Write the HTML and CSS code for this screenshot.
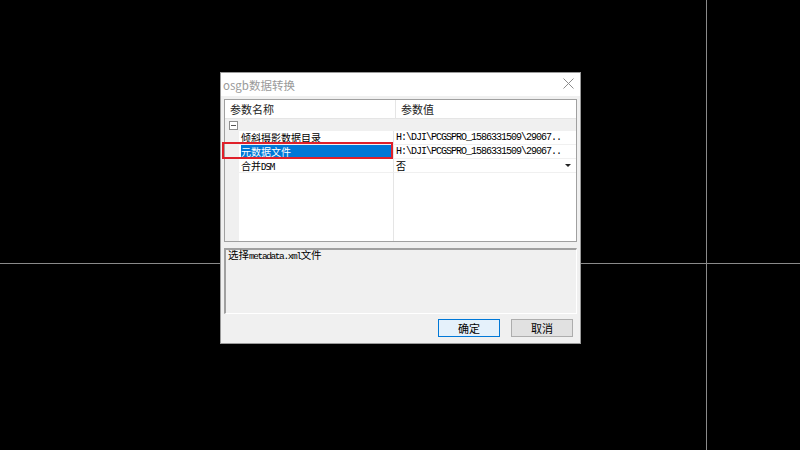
FILE: index.html
```html
<!DOCTYPE html>
<html lang="zh-CN">
<head>
  <meta charset="UTF-8">
  <title>osgb数据转换</title>
  <link rel="stylesheet" href="styles.css">
</head>
<body>
  <div class="desk">
    <div class="vline"></div>
    <div class="hline"></div>

    <div class="dlg">
      <div class="dlg-title">
        <span>osgb数据转换</span>
        <svg class="close" width="11" height="11" viewBox="0 0 11 11">
          <path d="M0.5 0.5 L10.5 10.5 M10.5 0.5 L0.5 10.5" stroke="#8c8c8c" stroke-width="1" fill="none"/>
        </svg>
      </div>

      <div class="dlg-body">
        <!-- 属性表 -->
        <div class="grid">
          <div class="grid-head">
            <div class="hc hc-name">参数名称</div>
            <div class="hc hc-val">参数值</div>
          </div>
          <div class="cat">
            <span class="fold"></span>
          </div>
          <div class="row">
            <div class="gut"></div>
            <div class="nm">倾斜摄影数据目录</div>
            <div class="vl mono">H:\DJI\PCGSPRO_1586331509\29067..</div>
          </div>
          <div class="row">
            <div class="gut"></div>
            <div class="nm sel">元数据文件</div>
            <div class="vl mono">H:\DJI\PCGSPRO_1586331509\29067..</div>
          </div>
          <div class="row">
            <div class="gut"></div>
            <div class="nm">合并<span class="small">DSM</span></div>
            <div class="vl">否<span class="drop"></span></div>
          </div>
          <div class="rest">
            <div class="gut"></div>
            <div class="nm"></div>
            <div class="vl"></div>
          </div>
        </div>

        <!-- 说明 -->
        <div class="desc">选择<span class="mono2">metadata.xml</span>文件</div>

        <div class="btns">
          <div class="btn btn-ok">确定</div>
          <div class="btn">取消</div>
        </div>
      </div>

      <div class="mark"></div>
    </div>
  </div>
</body>
</html>
```

FILE: styles.css
```css
html, body {
  margin: 0;
  padding: 0;
}
body {
  background: #000;
  font-family: "Noto Sans CJK SC", "Noto Sans", sans-serif;
  font-size: 12px;
  color: #000;
}

.desk {
  position: relative;
  width: 800px;
  height: 450px;
  overflow: hidden;
}

/* 十字光标 */
.vline {
  position: absolute;
  left: 706px;
  top: 0;
  width: 1px;
  height: 450px;
  background: #8a8a8a;
}
.hline {
  position: absolute;
  left: 0;
  top: 263px;
  width: 800px;
  height: 1px;
  background: #8a8a8a;
}

/* 对话框 */
.dlg {
  position: absolute;
  left: 220px;
  top: 72px;
  width: 359px;
  height: 270px;
  border: 1px solid #9a9a9a;
  background: #f0f0f0;
  display: flex;
  flex-direction: column;
}
.dlg-title {
  height: 23px;
  background: #fff;
  display: flex;
  align-items: center;
  justify-content: space-between;
  padding: 0 6px 0 2px;
  color: #9a9a9a;
  font-size: 11.5px;
}
.close {
  margin-top: -2px;
}

.dlg-body {
  flex: 1;
  padding: 3px 3px 0 3px;
  display: flex;
  flex-direction: column;
}

.grid {
  height: 141px;
  border: 1px solid #a0a0a0;
  background: #fff;
  display: flex;
  flex-direction: column;
}
.grid-head {
  display: flex;
  height: 18px;
  border-bottom: 1px solid #e5e5e5;
  font-size: 11px;
}
.hc {
  display: flex;
  align-items: center;
  padding-left: 5px;
  color: #222;
}
.hc-name {
  width: 165px;
  border-right: 1px solid #e5e5e5;
}
.cat {
  height: 12px;
  background: #f0f0f0;
  display: flex;
  align-items: center;
  padding-left: 4px;
}
.fold {
  width: 7px;
  height: 7px;
  border: 1px solid #8e8e8e;
  background: #fff;
  position: relative;
}
.fold:after {
  content: '';
  position: absolute;
  left: 1px;
  top: 3px;
  width: 5px;
  height: 1px;
  background: #555;
}

.row, .rest {
  display: flex;
  height: 14px;
}
.rest {
  flex: 1;
}
.gut {
  width: 14px;
  background: #f0f0f0;
}
.nm {
  width: 152px;
  height: 13px;
  border-right: 1px solid #e5e5e5;
  border-bottom: 1px solid #f0f0f0;
  padding-left: 2px;
  font-size: 10px;
  line-height: 13px;
  white-space: nowrap;
}
.rest .nm, .rest .vl {
  height: auto;
  border-bottom: none;
}
.nm.sel {
  background: #0078d7;
  color: #fff;
  margin-left: 2px;
  padding-left: 0;
  width: 152px;
}
.small {
  font-family: "DejaVu Sans Mono", monospace;
  font-size: 9px;
  letter-spacing: -1px;
}
.vl {
  flex: 1;
  height: 13px;
  position: relative;
  border-bottom: 1px solid #f0f0f0;
  padding-left: 2px;
  font-size: 10px;
  line-height: 13px;
  white-space: nowrap;
}
.vl.mono {
  font-family: "Liberation Mono", monospace;
  font-size: 10px;
  letter-spacing: -1px;
}
.drop {
  position: absolute;
  right: 5px;
  top: 5px;
  width: 0;
  height: 0;
  border-left: 3px solid transparent;
  border-right: 3px solid transparent;
  border-top: 3px solid #222;
}

/* 说明框 */
.desc {
  margin-top: 6px;
  height: 63px;
  border-top: 2px solid #a0a0a0;
  border-left: 2px solid #a0a0a0;
  border-right: 1px solid #fff;
  border-bottom: 1px solid #fff;
  padding: 0 2px;
  line-height: 9px;
  font-size: 10.5px;
}
.mono2 {
  font-family: "Liberation Mono", monospace;
  font-size: 9.5px;
  letter-spacing: -1.4px;
}

.btns {
  display: flex;
  justify-content: flex-end;
  gap: 11px;
  margin-top: 5px;
  padding-right: 4px;
}
.btn {
  width: 60px;
  height: 16px;
  border: 1px solid #adadad;
  background: #e1e1e1;
  text-align: center;
  line-height: 16px;
  font-size: 11px;
}
.btn-ok {
  border-color: #0078d7;
  background: #e5f1fb;
}

/* 红框标注 */
.mark {
  position: absolute;
  left: 1px;
  top: 69px;
  width: 167px;
  height: 13px;
  border: 2px solid #e0202a;
}
```
